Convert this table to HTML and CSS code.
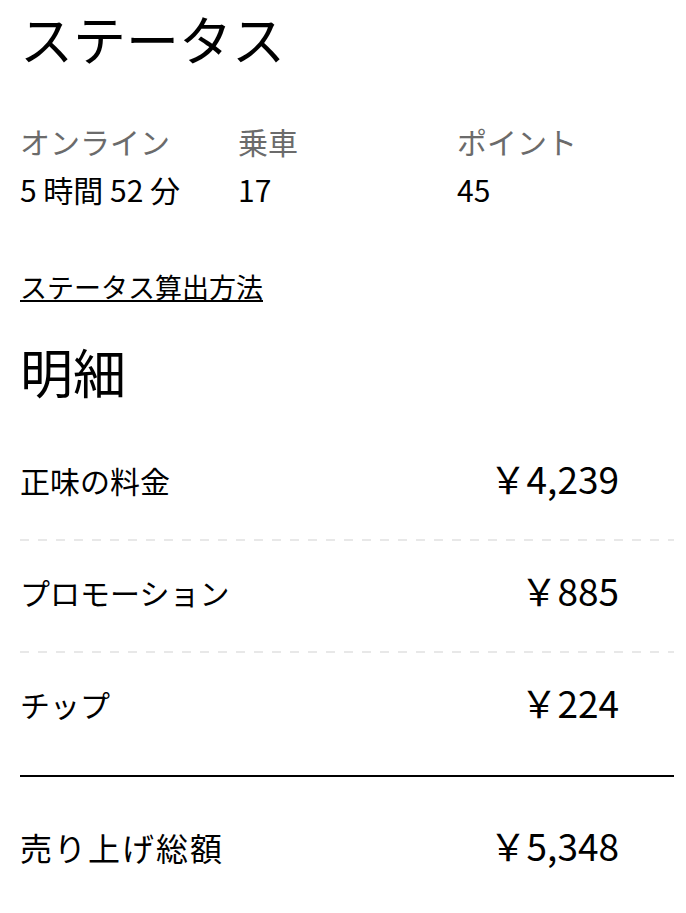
FILE: index.html
```html
<!DOCTYPE html>
<html lang="ja">
<head>
<meta charset="utf-8">
<link rel="stylesheet" href="styles.css">
</head>
<body>
<main class="page">
  <h1 class="title">ステータス</h1>
  <div class="stats">
    <div class="stat">
      <div class="stat-label">オンライン</div>
      <div class="stat-value">5 時間 52 分</div>
    </div>
    <div class="stat">
      <div class="stat-label">乗車</div>
      <div class="stat-value">17</div>
    </div>
    <div class="stat">
      <div class="stat-label">ポイント</div>
      <div class="stat-value">45</div>
    </div>
  </div>
  <a class="link" href="#">ステータス算出方法</a>
  <h2 class="title title-detail">明細</h2>
  <div class="rows">
    <div class="row dashed">
      <span class="row-label">正味の料金</span>
      <span class="row-amount">￥4,239</span>
    </div>
    <div class="row dashed">
      <span class="row-label">プロモーション</span>
      <span class="row-amount">￥885</span>
    </div>
    <div class="row">
      <span class="row-label">チップ</span>
      <span class="row-amount">￥224</span>
    </div>
  </div>
  <div class="row total">
    <span class="row-label total-label">売り上げ総額</span>
    <span class="row-amount">￥5,348</span>
  </div>
</main>
</body>
</html>
```

FILE: styles.css
```css
html, body {
  margin: 0;
  padding: 0;
  background: #ffffff;
}

body {
  font-family: "Noto Sans CJK JP", "Noto Sans", sans-serif;
  color: #000000;
}

.page {
  padding: 6px 12px 0 20px;
}

.title {
  margin: 0;
  font-size: 53px;
  font-weight: 400;
  line-height: 64px;
}

.stats {
  display: grid;
  grid-template-columns: 218px 219px 1fr;
  margin-top: 51px;
}

.stat-label {
  font-size: 30px;
  line-height: 40px;
  color: #6b6b6b;
}

.stat-value {
  font-size: 30px;
  line-height: 40px;
  margin-top: 8px;
}

.link {
  display: inline-block;
  margin-top: 60px;
  font-size: 27px;
  line-height: 36px;
  color: #000000;
  text-decoration: underline;
  text-decoration-thickness: 2px;
  text-underline-offset: 2px;
}

.title-detail {
  margin-top: 34px;
}

.rows {
  margin-top: 26px;
}

.row {
  box-sizing: border-box;
  display: flex;
  align-items: flex-start;
  justify-content: space-between;
  height: 112px;
  padding: 31px 55px 0 0;
}

.row.dashed {
  background: repeating-linear-gradient(to right, #e8e8e8 0 9px, transparent 9px 18px) left bottom / 100% 2px no-repeat;
}

.row-label {
  font-size: 30px;
  line-height: 40px;
}

.total-label {
  font-size: 32px;
  letter-spacing: 2px;
}

.row-amount {
  font-size: 37px;
  line-height: 40px;
  margin-top: -2px;
}

.total {
  border-top: 2px solid #000000;
  margin-top: 10px;
  height: 134px;
  padding-top: 50px;
}
```
